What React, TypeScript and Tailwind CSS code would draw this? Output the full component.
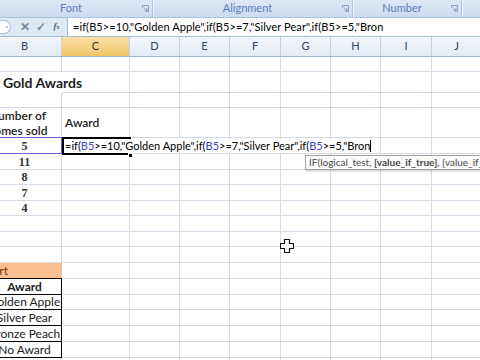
import React from 'react';

// column widths, B is wider than shown (its left part runs off screen)
const colWidths = ['w-[74px]', 'w-[68px]', 'w-[50px]', 'w-[50px]', 'w-[51px]', 'w-[50px]', 'w-[50px]', 'w-[51px]', 'w-[50px]'];
const colNames = ['B', 'C', 'D', 'E', 'F', 'G', 'H', 'I', 'J'];

type Kind = 'blank' | 'title' | 'header' | 'num' | 'chart' | 'table' | 'tableHead';

interface Row {
  h: string;
  kind: Kind;
  text?: string;
}

const rows: Row[] = [
  { h: 'h-[15px]', kind: 'blank' },
  { h: 'h-[21px]', kind: 'title', text: 'Gold Awards' },
  { h: 'h-[15px]', kind: 'blank' },
  { h: 'h-[30px]', kind: 'header' },
  { h: 'h-[16px]', kind: 'num', text: '5' },
  { h: 'h-[16px]', kind: 'num', text: '11' },
  { h: 'h-[15px]', kind: 'num', text: '8' },
  { h: 'h-[16px]', kind: 'num', text: '7' },
  { h: 'h-[15px]', kind: 'num', text: '4' },
  { h: 'h-[16px]', kind: 'blank' },
  { h: 'h-[15px]', kind: 'blank' },
  { h: 'h-[16px]', kind: 'blank' },
  { h: 'h-[16px]', kind: 'chart', text: 'Award Chart' },
  { h: 'h-[16px]', kind: 'tableHead', text: 'Award' },
  { h: 'h-[15px]', kind: 'table', text: 'Golden Apple' },
  { h: 'h-[16px]', kind: 'table', text: 'Silver Pear' },
  { h: 'h-[16px]', kind: 'table', text: 'Bronze Peach' },
  { h: 'h-[16px]', kind: 'table', text: 'No Award' },
  { h: 'h-[16px]', kind: 'blank' },
];

const formula = '=if(B5>=10,"Golden Apple",if(B5>=7,"Silver Pear",if(B5>=5,"Bron';

function Launcher() {
  return (
    <svg width="7" height="7" viewBox="0 0 7 7" className="text-[#8aa3c4]">
      <path d="M0.5 3V0.5H6.5V6.5H4" fill="none" stroke="currentColor" strokeWidth="1" />
      <path d="M2 2.5L5 5.5M5 3V5.5H2.5" fill="none" stroke="currentColor" strokeWidth="1" />
    </svg>
  );
}

function RibbonGroup({ label, w }: { label: string; w: string }) {
  return (
    <div className={`${w} h-full flex items-center border-r border-[#b0c6e1] shadow-[1px_0_0_#eef4fb]`}>
      <span className="flex-1 text-center text-[11px] text-[#5a7fb4]">{label}</span>
      <span className="mr-[3px]"><Launcher /></span>
    </div>
  );
}

function Cursor() {
  return (
    <svg width="14" height="14" viewBox="0 0 14 14" className="absolute left-[280px] top-[239px]">
      <path d="M4.5 0.5H9.5V4.5H13.5V9.5H9.5V13.5H4.5V9.5H0.5V4.5H4.5Z" fill="#fff" stroke="#111" strokeWidth="1.2" />
    </svg>
  );
}

function BCell({ row }: { row: Row }) {
  const base = `${colWidths[0]} shrink-0 h-full flex items-center`;
  switch (row.kind) {
    case 'title':
      return (
        <div className={`${base} relative z-10 pl-[15px]`}>
          <span className="whitespace-nowrap text-[14px] font-bold text-[#1e1e1e]">{row.text}</span>
        </div>
      );
    case 'header':
      return (
        <div className={`${base} justify-center pr-[14px] border-r border-b border-[#d5dbe6]`}>
          <span className="whitespace-nowrap text-center text-[12px] font-semibold leading-[15px] text-[#222]">
            Number of
            <br />
            homes sold
          </span>
        </div>
      );
    case 'num':
      return (
        <div className={`${base} justify-center border-r border-b border-[#d5dbe6]`}>
          <span className="text-[12px] leading-none font-semibold text-[#333] [font-family:'Liberation_Serif',serif]">{row.text}</span>
        </div>
      );
    case 'chart':
      return (
        <div className={`${base} bg-[#fac08f] border-b border-black`}>
          <div className="w-[20px] flex justify-end">
            <span className="whitespace-nowrap text-[12px] text-[#7a2f10]">{row.text}</span>
          </div>
        </div>
      );
    case 'tableHead':
      return (
        <div className={`${base} justify-center border-r border-b border-black`}>
          <span className="whitespace-nowrap text-[12px] font-bold text-[#222]">{row.text}</span>
        </div>
      );
    case 'table':
      return (
        <div className={`${base} justify-center border-r border-b border-black`}>
          <span className="whitespace-nowrap text-[12px] text-[#222]">{row.text}</span>
        </div>
      );
    default:
      return <div className={`${base} border-r border-b border-[#d5dbe6]`} />;
  }
}

function CCell({ row }: { row: Row }) {
  const base = `${colWidths[1]} shrink-0 h-full flex items-center border-r border-b border-[#d5dbe6]`;
  if (row.kind === 'header') {
    return (
      <div className={`${base} pl-[3px]`}>
        <span className="text-[12px] font-semibold text-[#222]">Award</span>
      </div>
    );
  }
  return <div className={base} />;
}

export default function App() {
  return (
    <div className="w-[480px] h-[360px] overflow-hidden bg-white relative [font-family:Lato,'Open_Sans',sans-serif]">
      {/* ribbon group labels */}
      <div className="h-[18px] flex bg-gradient-to-b from-[#dce8f6] to-[#cbdcf0] border-b border-[#abc2df]">
        <RibbonGroup label="Font" w="w-[153px]" />
        <RibbonGroup label="Alignment" w="w-[200px]" />
        <RibbonGroup label="Number" w="w-[109px]" />
        <div className="flex-1" />
      </div>

      {/* formula bar */}
      <div className="h-[19px] flex bg-[#dfe9f5] border-b border-[#a3bad7]">
        <div className="w-[67px] shrink-0 flex items-center">
          <div className="w-[11px] h-[14px] rounded-r-full border border-l-0 border-[#a9bcd6] bg-white flex items-center justify-end pr-[2px]">
            <span className="w-[2px] h-[2px] rounded-full bg-[#9fb1cb]" />
          </div>
          <span className="ml-[9px] text-[12px] font-bold text-[#7b8796] leading-none">✕</span>
          <span className="ml-[6px] text-[12px] font-bold text-[#7b8796] leading-none">✓</span>
          <span className="ml-[5px] w-[11px] h-[12px] flex items-center justify-center text-[9px] italic font-semibold text-[#5a6576] [font-family:'Liberation_Serif',serif]">f<span className="text-[6px] not-italic">x</span></span>
        </div>
        <div className="flex-1 bg-white border-l border-[#a3bad7] flex items-center pl-[5px]">
          <span className="whitespace-nowrap text-[11px] tracking-[0.08px] text-black">{formula}</span>
        </div>
      </div>

      {/* column headers */}
      <div className="h-[20px] flex -ml-[12px] border-b border-[#9eb6ce]">
        {colNames.map((c, i) => (
          <div
            key={c}
            className={`${colWidths[i]} shrink-0 h-full flex items-center justify-center border-r border-[#c5d3e2] text-[11px] ${
              c === 'C'
                ? 'bg-gradient-to-b from-[#fadfa8] to-[#f2c466] text-[#333]'
                : 'bg-gradient-to-b from-[#f3f6fb] to-[#e4eaf3] text-[#2c4466]'
            }`}
          >
            {c}
          </div>
        ))}
      </div>

      {/* sheet body */}
      <div className="relative -ml-[12px]">
        {rows.map((row, ri) => (
          <div key={ri} className={`${row.h} flex`}>
            <BCell row={row} />
            <CCell row={row} />
            {colWidths.slice(2).map((w, ci) => (
              <div key={ci} className={`${w} shrink-0 h-full border-r border-b border-[#d5dbe6]`} />
            ))}
          </div>
        ))}

        {/* B5 reference highlight */}
        <div className="absolute left-[11px] top-[80px] w-[63px] h-[17px] border border-[#6b5fd3]" />

        {/* C5 being edited */}
        <div className="absolute left-[74px] top-[80px] w-[69px] h-[18px] border-2 border-black border-r-0" />
        <div className="absolute left-[140px] top-[96px] w-[5px] h-[5px] bg-black border border-white" />
        <div className="absolute left-[76px] top-[82px] w-[312px] h-[14px] bg-white flex items-center pl-[1px]">
          <span className="whitespace-nowrap text-[11px] text-black">
            =if(<span className="text-[#3a46c8]">B5</span>&gt;=10,"Golden Apple",if(<span className="text-[#3a46c8]">B5</span>&gt;=7,"Silver Pear",if(<span className="text-[#3a46c8]">B5</span>&gt;=5,"Bron
          </span>
          <span className="w-px h-[12px] bg-black" />
        </div>

        {/* function tooltip */}
        <div className="absolute left-[317px] top-[98px] w-[190px] h-[15px] bg-[#fbfbfb] border border-[#a0a0a0] shadow-[1px_1px_2px_rgba(0,0,0,0.25)] flex items-center pl-[3px]">
          <span className="whitespace-nowrap text-[10px] text-[#4a4a4a]">
            IF(logical_test, <span className="font-bold">[value_if_true]</span>, [value_if_false])
          </span>
        </div>
      </div>

      <Cursor />
    </div>
  );
}
